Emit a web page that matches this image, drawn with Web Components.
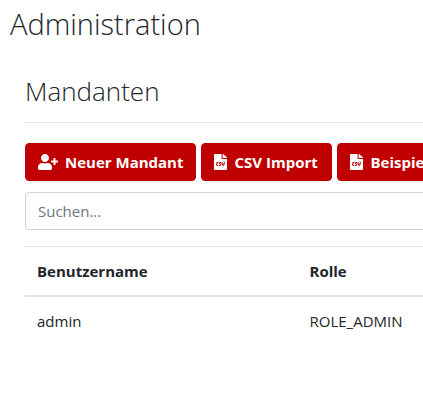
<!DOCTYPE html>
<html lang="de">
<head>
<meta charset="utf-8">
<title>Administration</title>
<style>
  body { margin: 0; overflow-x: hidden; background: #fff; color: #212529; font: 400 15px/24px "Open Sans", "Noto Sans", sans-serif; }
</style>
</head>
<body>
<admin-page heading="Administration">
  <admin-section heading="Mandanten">
    <button-row>
      <action-button icon="user-plus">Neuer Mandant</action-button>
      <action-button icon="file-csv">CSV Import</action-button>
      <action-button icon="file-csv">Beispie</action-button>
    </button-row>
    <search-field placeholder="Suchen..."></search-field>
    <client-table></client-table>
  </admin-section>
</admin-page>
<script>
const define = (name, render) => customElements.define(name, class extends HTMLElement {
  connectedCallback() {
    if (!this.shadowRoot) this.attachShadow({ mode: "open" }).innerHTML = render(this);
  }
});

const icons = {
  "user-plus": `<svg width="20" height="16" viewBox="0 0 640 512" fill="currentColor" aria-hidden="true"><path d="M624 208h-64v-64c0-8.800-7.200-16-16-16h-32c-8.800 0-16 7.200-16 16v64h-64c-8.800 0-16 7.200-16 16v32c0 8.800 7.200 16 16 16h64v64c0 8.800 7.200 16 16 16h32c8.800 0 16-7.200 16-16v-64h64c8.800 0 16-7.200 16-16v-32c0-8.800-7.200-16-16-16zm-400 48c70.700 0 128-57.300 128-128S294.700 0 224 0 96 57.300 96 128s57.300 128 128 128zm89.600 32h-16.700c-22.200 10.200-46.900 16-72.900 16s-50.600-5.800-72.900-16h-16.700C60.200 288 0 348.200 0 422.400V464c0 26.500 21.500 48 48 48h352c26.500 0 48-21.500 48-48v-41.600c0-74.200-60.200-134.400-134.400-134.400z"/></svg>`,
  "file-csv": `<svg width="13" height="16" preserveAspectRatio="none" viewBox="0 0 384 512" fill="currentColor" aria-hidden="true"><path fill-rule="evenodd" d="M224 136V0H24C10.700 0 0 10.700 0 24v464c0 13.300 10.700 24 24 24h336c13.300 0 24-10.700 24-24V160H248c-13.200 0-24-10.800-24-24zM128 280c0 4.400-3.600 8-8 8h-8c-8.800 0-16 7.200-16 16v32c0 8.800 7.200 16 16 16h8c4.400 0 8 3.600 8 8v16c0 4.400-3.600 8-8 8h-8c-26.500 0-48-21.500-48-48v-32c0-26.500 21.500-48 48-48h8c4.400 0 8 3.600 8 8v16zm44.300 104H160c-4.400 0-8-3.600-8-8v-16c0-4.400 3.600-8 8-8h12.300c6 0 10.400-3.500 10.400-6.600 0-1.300-.8-2.700-2.100-3.800l-21.900-18.800c-8.500-7.200-13.300-17.500-13.300-28.100 0-21.300 19-38.600 42.400-38.600H200c4.400 0 8 3.600 8 8v16c0 4.400-3.600 8-8 8h-12.300c-6 0-10.400 3.500-10.400 6.600 0 1.300.8 2.700 2.100 3.800l21.900 18.800c8.500 7.200 13.300 17.500 13.300 28.100 0 21.300-19 38.600-42.300 38.600zM256 264v20.800c0 20.300 5.700 40.200 16 56.900 10.300-16.700 16-36.600 16-56.900V264c0-4.400 3.600-8 8-8h16c4.400 0 8 3.600 8 8v20.800c0 35.500-12.900 68.900-36.300 94.100-3 3.300-7.300 5.100-11.700 5.100s-8.700-1.900-11.700-5.100C236.900 353.700 224 320.300 224 284.800V264c0-4.400 3.600-8 8-8h16c4.400 0 8 3.600 8 8zM377 105 279.100 7c-4.500-4.500-10.600-7-17-7H256v128h128v-6.100c0-6.300-2.500-12.400-7-16.900z"/></svg>`
};

define("admin-page", el => `
  <style>
    :host { display: block; min-width: 580px; box-sizing: border-box; padding: 0 10px; }
    h1 { margin: 0; padding: 4px 0 20px; font-size: 29px; line-height: 40px; font-weight: 300; }
    main { padding: 8px 0 0 15px; }
  </style>
  <h1>${el.getAttribute("heading")}</h1>
  <main><slot></slot></main>`);

define("admin-section", el => `
  <style>
    :host { display: block; }
    h2 { margin: 0; padding-bottom: 12px; font-size: 26px; line-height: 38px; font-weight: 300; border-bottom: 1px solid #e5e5e5; }
    div { display: flex; flex-direction: column; padding-top: 20px; }
  </style>
  <section><h2>${el.getAttribute("heading")}</h2><div><slot></slot></div></section>`);

define("button-row", () => `
  <style>:host { display: flex; gap: 5px; margin-bottom: 11px; }</style><slot></slot>`);

define("action-button", el => `
  <style>
    :host { display: block; }
    button { display: flex; align-items: center; gap: 7px; height: 38px; min-width: 131px; margin: 0; padding: 0 12px; border: 1px solid #c00000; border-radius: 4px; background: #c00000; color: #fff; font: inherit; font-weight: 700; white-space: nowrap; cursor: pointer; }
    svg { flex: none; }
  </style>
  <button type="button">${icons[el.getAttribute("icon")]}<span><slot></slot></span></button>`);

define("search-field", el => `
  <style>
    :host { display: block; margin-bottom: 16px; }
    input { display: block; box-sizing: border-box; width: 100%; height: 38px; margin: 0; padding: 0 12px; border: 1px solid #ced4da; border-radius: 4px; background: #fff; color: #495057; font: inherit; }
    input::placeholder { color: #6c757d; opacity: 1; }
  </style>
  <input type="search" aria-label="Suchen" placeholder="${el.getAttribute("placeholder")}">`);

define("client-table", () => `
  <style>
    :host { display: block; }
    table { width: 100%; table-layout: fixed; border-collapse: collapse; }
    th, td { padding: 12px; text-align: left; border-top: 1px solid #dee2e6; }
    th { font-weight: 700; border-bottom: 2px solid #dee2e6; }
  </style>
  <table>
    <thead><tr><th scope="col">Benutzername</th><th scope="col">Rolle</th></tr></thead>
    <tbody><tr><td>admin</td><td>ROLE_ADMIN</td></tr></tbody>
  </table>`);
</script>
</body>
</html>
